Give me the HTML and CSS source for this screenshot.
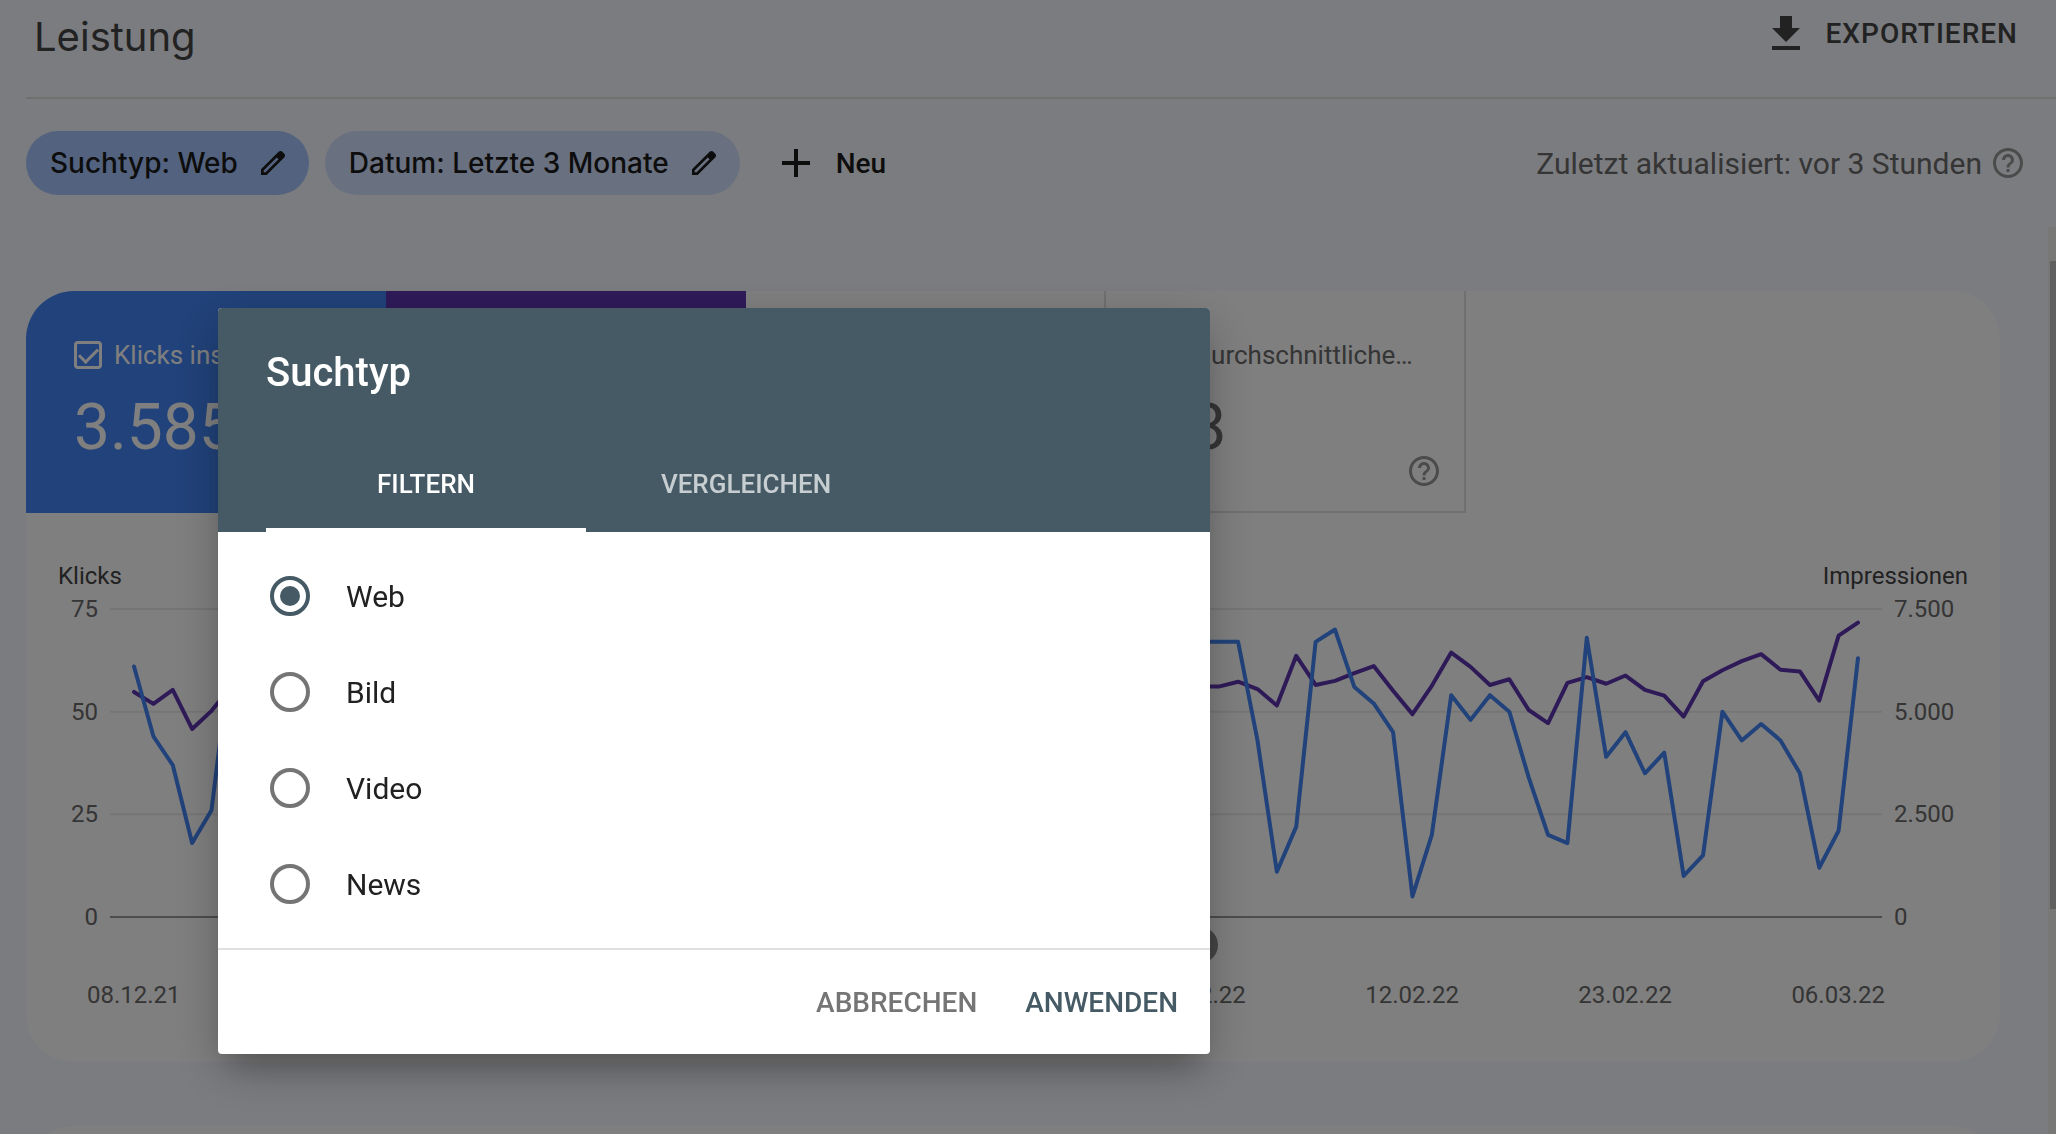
FILE: index.html
```html
<!DOCTYPE html>
<html lang="de">
<head>
<meta charset="utf-8">
<title>Leistung</title>
<link rel="stylesheet" href="styles.css">
</head>
<body>
<svg class="sprite" aria-hidden="true">
  <symbol id="pencil" viewBox="0 0 24 24"><path d="M5 19h1.425L16.2 9.225 14.775 7.8 5 17.575zm-2 2v-4.25L16.2 3.575q.3-.275.663-.425t.762-.15.775.15.65.45L20.425 5q.3.275.438.65T21 6.4q0 .4-.138.763t-.437.662L7.25 21z"/></symbol>
  <symbol id="help" viewBox="0 0 24 24"><path d="M11 18h2v-2h-2v2zm1-16C6.48 2 2 6.48 2 12s4.48 10 10 10 10-4.48 10-10S17.52 2 12 2zm0 18c-4.41 0-8-3.59-8-8s3.59-8 8-8 8 3.59 8 8-3.59 8-8 8zm0-14c-2.21 0-4 1.79-4 4h2c0-1.1.9-2 2-2s2 .9 2 2c0 2-3 1.75-3 5h2c0-2.25 3-2.5 3-5 0-2.21-1.79-4-4-4z"/></symbol>
  <symbol id="download" viewBox="0 0 24 24"><path d="M19 9h-4V3H9v6H5l7 7 7-7zM5 18v2h14v-2H5z"/></symbol>
  <symbol id="plus" viewBox="0 0 24 24"><path d="M19 13h-6v6h-2v-6H5v-2h6V5h2v6h6v2z"/></symbol>
</svg>

<header class="topbar">
  <h1 class="page-title">Leistung</h1>
  <button class="export" type="button"><svg class="icon-lg"><use href="#download"/></svg>EXPORTIEREN</button>
</header>

<div class="filters">
  <button class="chip chip-active" type="button">Suchtyp: Web<svg class="icon-sm"><use href="#pencil"/></svg></button>
  <button class="chip" type="button">Datum: Letzte 3 Monate<svg class="icon-sm"><use href="#pencil"/></svg></button>
  <button class="add" type="button"><svg class="icon-lg"><use href="#plus"/></svg>Neu</button>
  <p class="updated">Zuletzt aktualisiert: vor 3 Stunden<svg class="icon-help"><use href="#help"/></svg></p>
</div>

<div class="scroller">
  <main class="content">
    <section class="card">
      <div class="metrics">
        <div class="metric metric-clicks">
          <label class="metric-label"><input class="check" type="checkbox" checked><span class="metric-name">Klicks insgesamt</span></label>
          <div class="metric-value">3.585</div>
          <svg class="icon-help metric-help"><use href="#help"/></svg>
        </div>
        <div class="metric metric-impressions"></div>
        <div class="metric"></div>
        <div class="metric">
          <label class="metric-label"><input class="check" type="checkbox"><span class="metric-name">Durchschnittliche Position</span></label>
          <div class="metric-value">18</div>
          <svg class="icon-help metric-help"><use href="#help"/></svg>
        </div>
      </div>

      <div class="chart">
        <div class="chart-names"><span>Klicks</span><span>Impressionen</span></div>
        <div class="plot-row">
          <div class="axis axis-left"><span>75</span><span>50</span><span>25</span><span>0</span></div>
          <div class="plot">
            <svg class="lines" viewBox="-124 -7500 9148 7500" preserveAspectRatio="none">
              <path class="grid" d="M-124-7500H9024M-124-5000H9024M-124-2500H9024"/>
              <path class="baseline" d="M-124 0H9024"/>
              <polyline class="line line-impressions" points="0,-5480 100,-5190 200,-5530 300,-4580 400,-5020 500,-5600 600,-5720 700,-5500 800,-5650 900,-5300 1000,-4700 1100,-5200 1200,-5700 1300,-5800 1400,-5500 1500,-5200 1600,-4700 1700,-4300 1800,-4500 1900,-4900 2000,-5200 2100,-5100 2200,-4800 2300,-4600 2400,-4900 2500,-5300 2600,-5600 2700,-5800 2800,-5700 2900,-5500 3000,-5100 3100,-5000 3200,-5600 3300,-5900 3400,-5800 3500,-5700 3600,-5400 3700,-5000 3800,-5500 3900,-5900 4000,-6100 4100,-5900 4200,-5700 4300,-5300 4400,-5000 4500,-5500 4600,-6000 4700,-6100 4800,-5800 4900,-5600 5000,-5300 5100,-5000 5200,-5500 5300,-5800 5400,-5700 5500,-5610 5600,-5610 5700,-5730 5800,-5550 5900,-5150 6000,-6360 6100,-5650 6200,-5750 6300,-5940 6400,-6110 6500,-5510 6600,-4940 6700,-5630 6800,-6440 6900,-6090 7000,-5650 7100,-5790 7200,-5040 7300,-4720 7400,-5700 7500,-5840 7600,-5680 7700,-5880 7800,-5530 7900,-5390 8000,-4880 8100,-5740 8200,-6010 8300,-6230 8400,-6400 8500,-6020 8600,-5980 8700,-5270 8800,-6850 8900,-7170"/>
              <polyline class="line line-clicks" points="0,-6100 100,-4400 200,-3700 300,-1800 400,-2600 500,-6400 600,-5800 700,-5500 800,-5000 900,-3600 1000,-1500 1100,-2200 1200,-5600 1300,-5300 1400,-4700 1500,-3900 1600,-1200 1700,-900 1800,-1600 1900,-3000 2000,-3400 2100,-3100 2200,-2500 2300,-1000 2400,-1400 2500,-3600 2600,-4200 2700,-4700 2800,-4500 2900,-3700 3000,-1500 3100,-2100 3200,-5400 3300,-5800 3400,-5500 3500,-5200 3600,-4000 3700,-1400 3800,-2300 3900,-5900 4000,-6200 4100,-5800 4200,-5500 4300,-4400 4400,-1300 4500,-2000 4600,-6000 4700,-6300 4800,-5900 4900,-5400 5000,-4300 5100,-1500 5200,-2200 5300,-6100 5400,-6500 5500,-6700 5600,-6700 5700,-6700 5800,-4300 5900,-1100 6000,-2200 6100,-6700 6200,-7000 6300,-5600 6400,-5200 6500,-4500 6600,-500 6700,-2000 6800,-5400 6900,-4800 7000,-5400 7100,-5000 7200,-3400 7300,-2000 7400,-1800 7500,-6800 7600,-3900 7700,-4500 7800,-3500 7900,-4000 8000,-1000 8100,-1500 8200,-5000 8300,-4300 8400,-4700 8500,-4300 8600,-3500 8700,-1200 8800,-2100 8900,-6300"/>
            </svg>
            <span class="marker" style="left: 61.5%">1</span>
          </div>
          <div class="axis axis-right"><span>7.500</span><span>5.000</span><span>2.500</span><span>0</span></div>
        </div>
        <div class="dates">
          <span>08.12.21</span><span>19.12.21</span><span>30.12.21</span><span>10.01.22</span><span>21.01.22</span><span>01.02.22</span><span>12.02.22</span><span>23.02.22</span><span>06.03.22</span>
        </div>
      </div>
    </section>
    <section class="card card-next"></section>
  </main>
  <div class="scrollbar"><div class="thumb"></div></div>
</div>

<div class="backdrop">
  <form class="dialog" role="dialog" aria-labelledby="dialog-title">
    <div class="dialog-head">
      <h2 class="dialog-title" id="dialog-title">Suchtyp</h2>
      <div class="tabs" role="tablist">
        <button class="tab tab-active" type="button" role="tab" aria-selected="true">FILTERN</button>
        <button class="tab" type="button" role="tab" aria-selected="false">VERGLEICHEN</button>
      </div>
    </div>
    <div class="options">
      <label class="option"><input class="radio" type="radio" name="type" checked>Web</label>
      <label class="option"><input class="radio" type="radio" name="type">Bild</label>
      <label class="option"><input class="radio" type="radio" name="type">Video</label>
      <label class="option"><input class="radio" type="radio" name="type">News</label>
    </div>
    <div class="actions">
      <button class="action" type="button">ABBRECHEN</button>
      <button class="action action-primary" type="button">ANWENDEN</button>
    </div>
  </form>
</div>
</body>
</html>
```
FILE: styles.css
```css
* { box-sizing: border-box; }

body {
  margin: 0;
  height: 100vh;
  display: flex;
  flex-direction: column;
  overflow: hidden;
  background: #f6f8ff;
  color: #444;
  font-family: Roboto, "Liberation Sans", sans-serif;
}

button {
  border: 0;
  padding: 0;
  background: none;
  color: inherit;
  font: inherit;
  cursor: pointer;
}

svg { fill: currentColor; flex: none; }
.sprite { display: none; }
.icon-sm { width: 32px; height: 32px; }
.icon-lg { width: 48px; height: 48px; }
.icon-help { width: 36px; height: 36px; color: #969696; }

/* Header */
.topbar {
  display: flex;
  justify-content: space-between;
  align-items: flex-start;
  height: 99px;
  margin-left: 26px;
  padding: 8px 38px 0 8px;
  border-bottom: 2px solid #e0e0dc;
}
.page-title {
  margin: 0;
  font: 400 40px/58px Inter, sans-serif;
  color: #444;
}
.export {
  display: flex;
  align-items: center;
  gap: 16px;
  font-size: 28px;
  font-weight: 500;
  line-height: 52px;
  letter-spacing: 1px;
  color: #444;
}

/* Filter row */
.filters {
  display: flex;
  align-items: center;
  gap: 16px;
  padding: 32px 30px 32px 26px;
}
.chip {
  display: flex;
  align-items: center;
  gap: 19px;
  height: 64px;
  padding: 0 20px 0 24px;
  border-radius: 32px;
  background: #d3e1ff;
  color: #1a1a1a;
  font: 500 28px/64px Inter, sans-serif;
}
.chip-active { background: #a6c6ff; }
.add {
  display: flex;
  align-items: center;
  gap: 16px;
  margin-left: 16px;
  color: #1a1a1a;
  font-size: 28px;
  font-weight: 500;
}
.updated {
  display: flex;
  align-items: center;
  gap: 8px;
  margin: 0 0 0 auto;
  font-size: 30px;
  color: #6a6a6a;
}

/* Report area */
.scroller {
  flex: 1;
  min-height: 0;
  display: flex;
  overflow: hidden;
}
.content {
  flex: 1;
  min-width: 0;
  display: flex;
  flex-direction: column;
  gap: 64px;
  padding: 64px 48px 0 26px;
}
.scrollbar { width: 8px; background: #f1f1ef; padding: 34px 0 0 2px; }
.thumb { height: 648px; background: #c1c1c1; }

.card {
  flex: none;
  background: #fff;
  border-radius: 48px;
  overflow: hidden;
}
.card-next { height: 400px; }

.metrics { display: grid; grid-template-columns: repeat(4, 360px); }
.metric {
  position: relative;
  height: 222px;
  padding: 46px 48px 0;
  border: solid #e0e0e0;
  border-width: 0 2px 2px 0;
  color: #6a6a6a;
}
.metric-clicks { background: #4285f4; border: 0; color: #fff; }
.metric-impressions { background: #5e35b1; border: 0; }
.metric-label {
  display: flex;
  align-items: center;
  gap: 12px;
  font-size: 26px;
  line-height: 36px;
}
.metric-name {
  overflow: hidden;
  white-space: nowrap;
  text-overflow: ellipsis;
}
.metric-value { margin-top: 16px; font-size: 64px; line-height: 78px; }
.metric-help { position: absolute; right: 22px; bottom: 22px; }
.metric-clicks .metric-help { color: #fff; }

.check {
  appearance: none;
  flex: none;
  width: 28px;
  height: 28px;
  margin: 0;
  border: 3px solid currentColor;
  border-radius: 4px;
  display: grid;
  place-items: center;
  color: inherit;
}
.check:checked::before {
  content: "";
  width: 16px;
  height: 8px;
  border: solid currentColor;
  border-width: 0 0 3px 3px;
  transform: translateY(-2px) rotate(-45deg);
}

/* Chart */
.chart { padding: 48px 32px 52px; font-size: 24px; line-height: 30px; }
.chart-names { display: flex; justify-content: space-between; color: #444; }
.plot-row { display: flex; height: 308px; margin-top: 18px; }
.axis {
  display: flex;
  flex-direction: column;
  justify-content: space-between;
  margin: -15px 0;
  color: #6a6a6a;
}
.axis-left { width: 40px; margin-right: 12px; text-align: right; }
.axis-right { width: 74px; margin-left: 12px; }
.plot { position: relative; flex: 1; }
.lines { display: block; width: 100%; height: 100%; overflow: visible; }
.lines * { vector-effect: non-scaling-stroke; fill: none; }
.grid { stroke: #ebebeb; stroke-width: 2px; }
.baseline { stroke: #9a9a9a; stroke-width: 2px; }
.line { stroke-width: 4px; stroke-linejoin: round; stroke-linecap: round; }
.line-clicks { stroke: #4285f4; }
.line-impressions { stroke: #5e35b1; }
.marker {
  position: absolute;
  top: 100%;
  width: 36px;
  height: 36px;
  margin: 10px 0 0 -18px;
  border-radius: 50%;
  background: #8a8a8a;
  color: #fff;
  font-size: 20px;
  line-height: 36px;
  text-align: center;
}
.dates {
  display: flex;
  justify-content: space-between;
  margin: 63px 83px 0 29px;
  color: #6a6a6a;
}

/* Dialog */
.backdrop {
  position: fixed;
  inset: 0;
  padding: 308px 0 0 218px;
  background: rgba(0, 0, 0, .5);
}
.dialog {
  width: 992px;
  border-radius: 4px;
  overflow: hidden;
  background: #fff;
  box-shadow: 0 22px 30px -14px rgba(0, 0, 0, .2), 0 16px 48px rgba(0, 0, 0, .24);
}
.dialog-head { padding: 41px 48px 0; background: #455a64; color: #fff; }
.dialog-title { margin: 0; font-size: 40px; font-weight: 500; line-height: 48px; }
.tabs { display: flex; margin-top: 39px; }
.tab {
  width: 320px;
  height: 96px;
  padding-top: 4px;
  border-bottom: 4px solid transparent;
  color: rgba(255, 255, 255, .7);
  font-size: 26px;
  font-weight: 500;
}
.tab-active { border-color: #fff; color: #fff; }
.options { padding: 16px 48px; }
.option {
  display: flex;
  align-items: center;
  gap: 36px;
  height: 96px;
  padding-left: 4px;
  color: #212121;
  font-size: 30px;
}
.radio {
  appearance: none;
  width: 40px;
  height: 40px;
  margin: 0;
  border: 4px solid #757575;
  border-radius: 50%;
  display: grid;
  place-items: center;
}
.radio:checked { border-color: #455a64; }
.radio:checked::before {
  content: "";
  width: 20px;
  height: 20px;
  border-radius: 50%;
  background: #455a64;
}
.actions {
  display: flex;
  justify-content: flex-end;
  gap: 48px;
  padding: 37px 32px 35px;
  border-top: 2px solid #e0e0e0;
}
.action { color: #757575; font-size: 28px; font-weight: 500; line-height: 32px; }
.action-primary { color: #455a64; }
```
